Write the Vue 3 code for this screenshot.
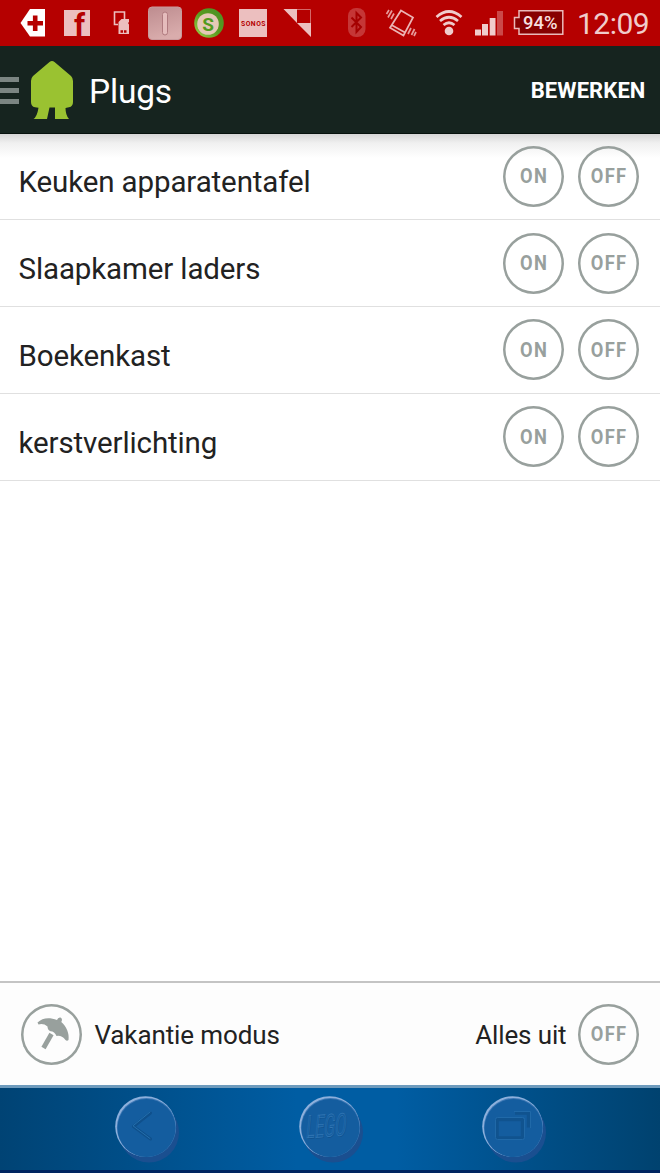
<template>
  <div class="screen">
    <!-- status bar -->
    <div class="status-bar">
      <svg width="56" height="46" viewBox="0 0 56 46">
        <path d="M20.5 23 L30 9 H45 V36.500 H30 Z" fill="#fff" />
        <path d="M27.500 23.200 H43 M35.200 15.500 V31" stroke="#b50000" stroke-width="4.600" />
      </svg>
      <svg width="44" height="46" viewBox="56 0 44 46">
        <rect x="64" y="10" width="26" height="26" fill="#ecbfbf" />
        <text x="74" y="36" class="fb">f</text>
      </svg>
      <svg width="45" height="46" viewBox="100 0 45 46">
        <path d="M118 24.500 H114.500 V12 H124.500 V19" fill="none" stroke="#ecbfbf" stroke-width="1.600" />
        <path d="M121.500 19 H129 V22 L128 23 L129 24.500 V34 H118.500 V22 Z" fill="#ecbfbf" />
        <path d="M120.500 31.500 H123 M124 31.500 H126.500" stroke="#b50000" stroke-width="2.500" />
      </svg>
      <svg width="43" height="46" viewBox="145 0 43 46">
        <defs>
          <linearGradient id="tile" x1="0" y1="0" x2="0.3" y2="1">
            <stop offset="0" stop-color="#bd8c8f" />
            <stop offset="1" stop-color="#d9acac" />
          </linearGradient>
        </defs>
        <rect x="148.500" y="7" width="33" height="32.500" rx="3.500" fill="url(#tile)" stroke="#c99a9c" />
        <rect x="162.500" y="12" width="5" height="23" rx="2.500" fill="#e5bcbc" stroke="#b07a7f" />
      </svg>
      <svg width="42" height="46" viewBox="188 0 42 46">
        <defs>
          <linearGradient id="ring" x1="0" y1="1" x2="1" y2="0">
            <stop offset="0" stop-color="#a3d44a" />
            <stop offset="0.5" stop-color="#579b20" />
            <stop offset="1" stop-color="#4a8f25" />
          </linearGradient>
        </defs>
        <circle cx="209" cy="23" r="14.800" fill="url(#ring)" />
        <circle cx="208" cy="24" r="10.800" fill="#e5c9b6" />
        <text x="208" y="30.500" class="spot">S</text>
      </svg>
      <svg width="45" height="46" viewBox="230 0 45 46">
        <rect x="239" y="9" width="28" height="28" fill="#ecbfbf" />
        <text x="241" y="25.800" class="sonos" textLength="24.500">SONOS</text>
      </svg>
      <svg width="55" height="46" viewBox="275 0 55 46">
        <path d="M283.500 9 H297 V23 Z M297 23 H311 V37 Z" fill="#ecbfbf" />
        <path d="M297 9.500 H310.500 V23" fill="none" stroke="#d46868" />
      </svg>
      <svg width="45" height="46" viewBox="330 0 45 46">
        <rect x="348" y="8" width="17.500" height="29" rx="8" fill="#c53636" />
        <path d="M351.500 17.500 L361 27 L356.500 32 V13 L361 17.500 L351.500 27" fill="none" stroke="#a50000" stroke-width="2" />
      </svg>
      <svg width="50" height="46" viewBox="375 0 50 46">
        <path d="M401 10.500 L413 17.500 L403.500 35.500 L390 27.800 Z M391.500 25 L405 32.500" fill="none" stroke="#ecb4b4" stroke-width="1.700" />
        <path d="M386.500 14 L389 10 M388 17.500 L392 10.500 M391 19 L394 13.500 M408 34 L411 28 M411.500 35 L414.500 29 M414 36 L416 32" stroke="#e79c9c" stroke-width="1.700" />
      </svg>
      <svg width="45" height="46" viewBox="425 0 45 46">
        <circle cx="449" cy="31" r="4.300" fill="#f0cccc" />
        <g fill="none" stroke="#f0cccc" stroke-width="2.700">
          <path d="M436.500 17 Q449 6 461.500 17" />
          <path d="M440 21 Q449 13.500 458 21" />
          <path d="M443.500 25 Q449 20.500 454.500 25" />
        </g>
      </svg>
      <svg width="38" height="46" viewBox="470 0 38 46">
        <path d="M475 29.500 H481 V35.500 H475 Z M482 24 H488 V35.500 H482 Z M489.700 18 H495.500 V35.500 H489.700 Z" fill="#f0cccc" />
        <rect x="497" y="11" width="6" height="24.500" fill="#cb4949" />
      </svg>
      <svg width="62" height="46" viewBox="508 0 62 46">
        <path d="M519 10.800 H562.800 V34.200 H519 V28.500 H514.500 V17.500 H519 Z" fill="#870000" stroke="#eab9b9" stroke-width="1.500" />
        <text x="523" y="29.300" class="battery" textLength="34.500" lengthAdjust="spacingAndGlyphs">94%</text>
      </svg>
      <span class="clock">12:09</span>
    </div>

    <!-- action bar -->
    <header class="action-bar">
      <div class="menu-icon">
        <i></i>
        <i></i>
        <i></i>
      </div>
      <svg class="logo" width="44" height="60" viewBox="30 60 44 60">
        <path
          d="M49.500 62 Q52 60 54.500 62 L71 76 Q73 78 73 81 V102 Q73 106.500 69 107.300 L65.500 108 Q65.500 115 69 119 H55 V107.500 H49.500 L47 119 H33.500 Q37 117 38.500 107.800 L35 107.300 Q31 106.500 31 102 V81 Q31 78 33 76 Z"
          fill="#9ac231"
        />
      </svg>
      <h1 class="title">Plugs</h1>
      <button class="edit-button">BEWERKEN</button>
    </header>

    <!-- plugs -->
    <main class="plug-list">
      <div v-for="plug in plugs" :key="plug" class="plug-row">
        <span class="plug-name">{{ plug }}</span>
        <button class="round-button"><span>ON</span></button>
        <button class="round-button"><span>OFF</span></button>
      </div>
    </main>

    <footer class="bottom-bar">
      <button class="round-button" aria-label="Vakantie modus">
        <svg width="56" height="56" viewBox="23.500 1005.500 56 56">
          <path
            d="M37 1022 C42 1017 49 1016.500 56.500 1019.500 Q57.500 1016.500 60 1017 Q62.500 1018.500 60.800 1021.500 C66 1026 69 1033 68 1039.500 Q66.500 1041 65 1039.500 Q61 1034.500 56 1035.500 Q54 1031 50 1030.800 Q47 1029.500 47 1026 Q43 1022.500 38 1024 Z"
            fill="#98a09d"
          />
          <path d="M51 1033.500 L43 1047.500" stroke="#98a09d" stroke-width="4.800" />
        </svg>
      </button>
      <span class="bottom-label holiday">Vakantie modus</span>
      <span class="bottom-label all-off">Alles uit</span>
      <button class="round-button"><span>OFF</span></button>
    </footer>

    <!-- navigation keys, lego theme -->
    <nav class="nav-bar">
      <svg v-for="key in navKeys" :key="key" width="72" height="72" viewBox="0 0 72 72">
        <circle cx="36" cy="37.500" r="30" fill="#1a4f90" />
        <circle cx="32.500" cy="31.500" r="30.300" fill="#8db0dc" />
        <circle cx="33.500" cy="32.500" r="29.600" fill="#3d78b5" />
        <circle cx="33.500" cy="33" r="29" fill="#145d9f" />
        <g v-if="key === 'back'" fill="none" stroke-linecap="round" stroke-linejoin="round">
          <path d="M37.500 18 L20.500 31.500 L37.500 44" stroke="#0f508c" stroke-width="3" />
          <path d="M37 17 L20 30.800 L37 43.500" stroke="#2470ae" stroke-width="1" />
        </g>
        <g v-else-if="key === 'home'" transform="translate(8.500 43) rotate(-4) skewX(-10)">
          <text x="0.800" y="0.800" class="lego shade" textLength="40" lengthAdjust="spacingAndGlyphs">LEGO</text>
          <text x="0" y="0" class="lego" textLength="40" lengthAdjust="spacingAndGlyphs">LEGO</text>
        </g>
        <g v-else fill="none" stroke-linejoin="round">
          <path d="M35 18 H48.500 V32.500" stroke="#10538f" stroke-width="3.500" />
          <path d="M34 16.500 H50.500 V33" stroke="#2069a8" stroke-width="1" />
          <rect x="17" y="24.500" width="25.500" height="18.500" rx="1" stroke="#10538f" stroke-width="3.500" />
          <rect x="15.500" y="22.500" width="29" height="22" rx="2" stroke="#2069a8" stroke-width="1" />
        </g>
      </svg>
    </nav>
  </div>
</template>

<script setup>
import { ref } from 'vue'

const plugs = ref([
  'Keuken apparatentafel',
  'Slaapkamer laders',
  'Boekenkast',
  'kerstverlichting'
])

const navKeys = ['back', 'home', 'recent']
</script>

<style>
body {
  margin: 0;
}
</style>

<style scoped>
.screen {
  display: flex;
  flex-direction: column;
  width: 660px;
  height: 1173px;
  overflow: hidden;
  background: #fff;
  color: #222;
  font-family: Roboto, "Liberation Sans", sans-serif;
}

svg {
  display: block;
  flex: none;
  overflow: visible;
}

button {
  padding: 0;
  border: none;
  background: none;
  font-family: inherit;
}

.status-bar {
  display: flex;
  flex: none;
  height: 46px;
  background: #b50000;
}

.fb {
  font-size: 31px;
  font-weight: 700;
  fill: #b50000;
}

.spot {
  font-size: 19px;
  font-weight: 700;
  text-anchor: middle;
  fill: #519b1e;
}

.sonos {
  font-size: 6.800px;
  font-weight: 700;
  fill: #b50000;
}

.battery {
  font-size: 19px;
  font-weight: 500;
  fill: #f6dede;
}

.clock {
  margin-left: 7px;
  font-size: 30px;
  letter-spacing: -0.500px;
  line-height: 48px;
  color: #f0cccc;
}

.action-bar {
  display: flex;
  flex: none;
  align-items: center;
  box-sizing: border-box;
  height: 87.500px;
  padding-right: 14.500px;
  border-bottom: 1px solid #06110d;
  background: #16241f;
  color: #fff;
}

.menu-icon {
  display: flex;
  flex-direction: column;
  gap: 6px;
  margin-top: 3px;
}

.menu-icon i {
  width: 18.500px;
  height: 5px;
  background: #7b8582;
}

.logo {
  margin: 2px 0 0 11.500px;
}

.title {
  margin: 5px 0 0 15px;
  font-size: 33.500px;
  font-weight: 400;
  letter-spacing: -0.200px;
  line-height: 40px;
}

.edit-button {
  margin: 3px 0 0 auto;
  color: #fff;
  font-size: 22px;
  font-weight: 700;
  letter-spacing: 0.100px;
}

.plug-list {
  flex: 1;
  background: linear-gradient(#d6d6d6, #f0f0f0 9px, #fff 24px);
}

.plug-row {
  display: flex;
  align-items: center;
  gap: 14px;
  box-sizing: border-box;
  height: 86.750px;
  padding: 0 21px 0 18.500px;
  border-bottom: 1.500px solid #e0e0e0;
}

.plug-name {
  flex: 1;
  padding-top: 12px;
  font-size: 29.500px;
  letter-spacing: -0.120px;
  line-height: 36px;
}

.round-button {
  display: flex;
  flex: none;
  align-items: center;
  justify-content: center;
  width: 61px;
  height: 61px;
  border-radius: 50%;
  box-shadow: inset 0 0 0 2.500px #98a09d;
  color: #98a09d;
  font-size: 21px;
  font-weight: 700;
}

/* narrow, widely tracked capitals */
.round-button span {
  margin-right: -1.500px;
  letter-spacing: 1.500px;
  transform: scaleX(0.87);
}

.bottom-bar {
  display: flex;
  flex: none;
  align-items: center;
  box-sizing: border-box;
  height: 104px;
  padding: 0 21px;
  border-top: 2px solid #c4c4c4;
  background: #fdfdfd;
}

.bottom-label {
  padding-top: 2px;
  font-size: 26px;
  letter-spacing: -0.120px;
}

.holiday {
  flex: 1;
  margin-left: 12.500px;
}

.all-off {
  margin-right: 11.500px;
}

.nav-bar {
  display: flex;
  flex: none;
  gap: 111.500px;
  box-sizing: border-box;
  height: 88px;
  padding: 7px 0 0 113px;
  border-top: 3px solid #6e9bbd;
  border-bottom: 3px solid #002561;
  background: linear-gradient(90deg, #004374, #005da3 45%, #005da3 60%, #00426f);
}

.lego {
  font-size: 31px;
  font-weight: 400;
  fill: #145d9f;
  stroke: #3478b5;
  stroke-width: 0.7px;
}

.lego.shade {
  fill: none;
  stroke: #0f508c;
}
</style>
